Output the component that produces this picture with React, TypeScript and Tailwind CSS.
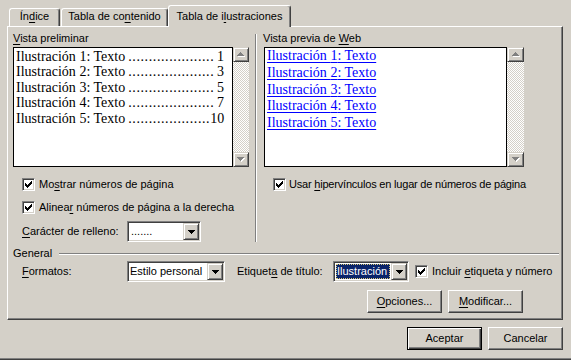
import React from "react";

function U({ children }: { children: React.ReactNode }) {
  return <span className="underline decoration-1 underline-offset-[2px]">{children}</span>;
}

function Check() {
  return (
    <span className="w-[13px] h-[13px] shrink-0 bg-white border border-t-[#808080] border-l-[#808080] border-r-white border-b-white shadow-[inset_1px_1px_#404040,inset_-1px_-1px_#d4d0c8] flex items-center justify-center">
      <svg width="7" height="7" viewBox="0 0 7 7" shapeRendering="crispEdges">
        <rect x="0" y="2" width="1" height="3" fill="#000" />
        <rect x="1" y="3" width="1" height="3" fill="#000" />
        <rect x="2" y="4" width="1" height="3" fill="#000" />
        <rect x="3" y="3" width="1" height="3" fill="#000" />
        <rect x="4" y="2" width="1" height="3" fill="#000" />
        <rect x="5" y="1" width="1" height="3" fill="#000" />
        <rect x="6" y="0" width="1" height="3" fill="#000" />
      </svg>
    </span>
  );
}

function ArrowDown({ color = "#000" }: { color?: string }) {
  return (
    <svg width="7" height="4" viewBox="0 0 7 4" shapeRendering="crispEdges">
      <path d="M0 0h7v1H6v1H5v1H4v1H3V3H2V2H1V1H0z" fill={color} />
    </svg>
  );
}

function ScrollBtn({ up }: { up?: boolean }) {
  return (
    <div className="h-[15px] bg-[#d4d0c8] border border-t-[#d4d0c8] border-l-[#d4d0c8] border-r-[#404040] border-b-[#404040] shadow-[inset_1px_1px_#ffffff,inset_-1px_-1px_#808080] flex items-center justify-center">
      <svg width="8" height="5" viewBox="0 0 8 5" shapeRendering="crispEdges">
        {up ? (
          <>
            <path d="M4 1h1v1h1v1h1v1h1v1H1V4h1V3h1V2h1z" fill="#ffffff" />
            <path d="M3 0h1v1h1v1h1v1h1v1H0V3h1V2h1V1h1z" fill="#808080" />
          </>
        ) : (
          <>
            <path d="M1 1h7v1H7v1H6v1H5v1H4V4H3V3H2V2H1z" fill="#ffffff" />
            <path d="M0 0h7v1H6v1H5v1H4v1H3V3H2V2H1V1H0z" fill="#808080" />
          </>
        )}
      </svg>
    </div>
  );
}

function Scrollbar({ w }: { w: string }) {
  return (
    <div className={`${w} flex flex-col`}>
      <ScrollBtn up />
      <div className="flex-1 bg-[image:repeating-conic-gradient(#d4d0c8_0%_25%,#ffffff_0%_50%)] bg-[length:2px_2px]" />
      <ScrollBtn />
    </div>
  );
}

function ComboBtn() {
  return (
    <div className="w-[16px] h-full bg-[#d4d0c8] border border-t-[#d4d0c8] border-l-[#d4d0c8] border-r-[#404040] border-b-[#404040] shadow-[inset_1px_1px_#ffffff,inset_-1px_-1px_#808080] flex items-center justify-center">
      <ArrowDown />
    </div>
  );
}

function Button({ children, def, w }: { children: React.ReactNode; def?: boolean; w: string }) {
  return (
    <div
      className={
        def
          ? `${w} h-[23px] bg-[#d4d0c8] border border-black shadow-[inset_1px_1px_#ffffff,inset_-1px_-1px_#404040,inset_-2px_-2px_#808080] flex items-center justify-center`
          : `${w} h-[23px] bg-[#d4d0c8] border border-t-white border-l-white border-r-[#404040] border-b-[#404040] shadow-[inset_-1px_-1px_#808080] flex items-center justify-center`
      }
    >
      <span>{children}</span>
    </div>
  );
}

const nums = ["1", "3", "5", "7", "10"];

export default function App() {
  return (
    <div className="w-[571px] h-[360px] bg-[#d4d0c8] flex flex-col font-['Liberation_Sans',Arial,sans-serif] text-[11px] leading-[13px] text-black overflow-hidden select-none">
      {/* Tabs */}
      <div className="h-[26px] flex items-end pl-[9px]">
        <div className="h-[18px] w-[51px] rounded-t-[3px] border-t border-l border-r border-t-white border-l-white border-r-[#404040] shadow-[inset_-1px_0_#808080] pt-[1px] text-center">
          Ín<U>d</U>ice
        </div>
        <div className="ml-[1px] h-[18px] w-[107px] rounded-t-[3px] border-t border-l border-r border-t-white border-l-white border-r-[#404040] shadow-[inset_-1px_0_#808080] pt-[1px] text-center">
          Tabla de co<U>n</U>tenido
        </div>
        <div className="relative z-10 -mb-px h-[22px] w-[123px] bg-[#d4d0c8] rounded-t-[3px] border-t border-l border-r border-t-white border-l-white border-r-[#404040] shadow-[inset_-1px_0_#808080] pt-[4px] text-center">
          Tabla de i<U>l</U>ustraciones
        </div>
      </div>

      {/* Panel */}
      <div className="ml-[7px] w-[556px] h-[294px] shrink-0 border border-t-white border-l-white border-r-[#404040] border-b-[#404040] shadow-[inset_-1px_-1px_#808080] pl-[5px] pt-[5px] pr-[3px] flex flex-col">
        <div className="flex">
          {/* Left column */}
          <div className="w-[236px] flex flex-col">
            <div className="h-[13px]">
              <U>V</U>ista preliminar
            </div>
            <div className="mt-[2px] h-[120px] flex">
              <div className="w-[220px] bg-white border border-black pt-[1px] pl-[2px] pr-[8px] font-['Liberation_Serif','Times_New_Roman',serif] text-[14px] leading-[15.4px]">
                {nums.map((n, i) => (
                  <div key={n} className="flex whitespace-nowrap">
                    <span>Ilustración {i + 1}: Texto</span>
                    <span className="ml-[3px] tracking-[0.6px]">
                      {n.length > 1 ? "...................." : "....................."}
                    </span>
                    <span className="ml-auto">{n}</span>
                  </div>
                ))}
              </div>
              <Scrollbar w="w-[16px]" />
            </div>
            <div className="mt-[11px] pl-[9px] h-[13px] flex items-center">
              <Check />
              <span className="ml-[4px] whitespace-nowrap">
                Mo<U>s</U>trar números de página
              </span>
            </div>
            <div className="mt-[10px] pl-[9px] h-[13px] flex items-center">
              <Check />
              <span className="ml-[4px] whitespace-nowrap">
                Alinea<U>r</U> números de página a la derecha
              </span>
            </div>
            <div className="mt-[7px] pl-[9px] h-[21px] flex items-center">
              <span className="w-[105px] whitespace-nowrap">
                <U>C</U>arácter de relleno:
              </span>
              <div className="w-[74px] h-[21px] bg-white border border-t-[#808080] border-l-[#808080] border-r-white border-b-white shadow-[inset_1px_1px_#404040,inset_-1px_-1px_#d4d0c8] p-[1px] flex">
                <div className="flex-1 flex items-center pl-[2px]">.......</div>
                <ComboBtn />
              </div>
            </div>
          </div>

          {/* Separator */}
          <div className="ml-[6px] mt-[2px] w-[2px] border-l border-l-[#808080] border-r border-r-white" />

          {/* Right column */}
          <div className="ml-[6px] w-[261px] flex flex-col">
            <div className="h-[13px]">
              Vista previa de <U>W</U>eb
            </div>
            <div className="mt-[2px] ml-[1px] h-[120px] flex">
              <div className="w-[243px] bg-white border border-black pl-[2px] font-['Liberation_Serif','Times_New_Roman',serif] text-[14px] leading-[16.8px] text-[#0000ff]">
                {nums.map((n, i) => (
                  <div key={n}>
                    <span className="underline decoration-1 underline-offset-[2px]">Ilustración {i + 1}: Texto</span>
                  </div>
                ))}
              </div>
              <Scrollbar w="w-[17px]" />
            </div>
            <div className="mt-[11px] pl-[10px] h-[13px] flex items-center">
              <Check />
              <span className="ml-[3px] whitespace-nowrap tracking-[-0.2px]">
                Usar <U>h</U>ipervínculos en lugar de números de página
              </span>
            </div>
          </div>
        </div>

        {/* General */}
        <div className="mt-[5px] h-[13px] flex items-start">
          <span>General</span>
          <div className="ml-[7px] mt-[6px] flex-1 h-[2px] border-t border-t-[#808080] border-b border-b-white" />
        </div>

        <div className="mt-[1px] pl-[9px] h-[21px] flex items-center">
          <span className="w-[105px]">
            <U>F</U>ormatos:
          </span>
          <div className="w-[98px] h-[21px] bg-white border border-t-[#808080] border-l-[#808080] border-r-white border-b-white shadow-[inset_1px_1px_#404040,inset_-1px_-1px_#d4d0c8] p-[1px] flex">
            <div className="flex-1 flex items-center pl-[1px] whitespace-nowrap">Estilo personal</div>
            <ComboBtn />
          </div>
          <span className="ml-[12px] w-[96px] whitespace-nowrap">
            Etiquet<U>a</U> de título:
          </span>
          <div className="w-[76px] h-[21px] bg-white border border-t-[#808080] border-l-[#808080] border-r-white border-b-white shadow-[inset_1px_1px_#404040,inset_-1px_-1px_#d4d0c8] p-[1px] flex">
            <div className="flex-1 flex p-[1px]">
              <div className="flex-1 bg-[#0a246a] text-white flex items-center pl-[1px] outline outline-1 outline-dotted outline-[#d8c878] -outline-offset-1 whitespace-nowrap">
                Ilustración
              </div>
            </div>
            <ComboBtn />
          </div>
          <div className="ml-[6px] flex items-center">
            <Check />
            <span className="ml-[4px] whitespace-nowrap">
              Incluir <U>e</U>tiqueta y número
            </span>
          </div>
        </div>

        <div className="mt-[8px] flex justify-end gap-[6px] pr-[36px]">
          <Button w="w-[75px]">
            <U>O</U>pciones...
          </Button>
          <Button w="w-[75px]">
            <U>M</U>odificar...
          </Button>
        </div>
      </div>

      {/* Bottom buttons */}
      <div className="mt-[7px] flex justify-end gap-[6px] pr-[8px]">
        <Button w="w-[75px]" def>
          Aceptar
        </Button>
        <Button w="w-[75px]">Cancelar</Button>
      </div>

      <div className="mt-auto h-[2px] border-t border-t-[#808080] border-b border-b-[#404040]" />
    </div>
  );
}
